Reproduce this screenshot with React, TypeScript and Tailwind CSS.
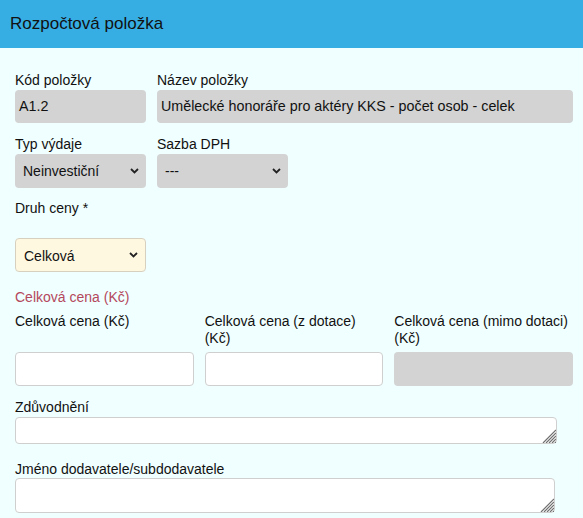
import React from "react";

const Chevron = () => (
  <svg width="9" height="6" viewBox="0 0 9 6" className="pointer-events-none absolute right-[7px] top-1/2 -translate-y-1/2">
    <path d="M1 1 L4.5 4.5 L8 1" fill="none" stroke="#222" strokeWidth="1.8" />
  </svg>
);

const Grip = () => (
  <svg width="14" height="14" viewBox="0 0 14 14" className="pointer-events-none absolute right-[1px] bottom-[1px]">
    <path d="M1 14 L14 1 M4 14 L14 4 M7 14 L14 7 M10 14 L14 10 M13 14 L14 13" stroke="#6f6f6f" strokeWidth="1.2" />
  </svg>
);

function Select({ value, className }: { value: string; className: string }) {
  return (
    <div className={"relative rounded-[4px] " + className}>
      <div className="pl-[8px] text-[14px] text-[#111] leading-[34px] h-full">{value}</div>
      <Chevron />
    </div>
  );
}

function Area({ className }: { className: string }) {
  return (
    <div className={"relative " + className}>
      <textarea className="block w-full h-full resize-none rounded-[4px] bg-white border border-[#cfcfcf] outline-none" />
      <Grip />
    </div>
  );
}

export default function App() {
  return (
    <div className="w-[583px] h-[518px] bg-[#f0ffff] overflow-hidden" style={{ fontFamily: '"Liberation Sans", Arial, sans-serif' }}>
      <div className="h-[48px] bg-[#36aee4] flex items-center pl-[10px]">
        <span className="text-[17px] text-[#111]">Rozpočtová položka</span>
      </div>
      <div className="pl-[15px] pr-[10px] pt-[24px] text-[14px] text-[#111]">
        <div className="flex gap-[11px]">
          <div className="w-[131px] flex flex-col">
            <div className="leading-[17px] mb-[1px]">Kód položky</div>
            <div className="h-[33px] rounded-[4px] bg-[#d3d3d3] pl-[4px] text-[14.3px] leading-[33px]">A1.2</div>
          </div>
          <div className="flex-1 flex flex-col">
            <div className="leading-[17px] mb-[1px]">Název položky</div>
            <div className="h-[33px] rounded-[4px] bg-[#d3d3d3] pl-[4px] text-[14.3px] leading-[33px]">Umělecké honoráře pro aktéry KKS - počet osob - celek</div>
          </div>
        </div>
        <div className="flex gap-[11px] mt-[13px]">
          <div className="w-[131px] flex flex-col">
            <div className="leading-[17px] mb-[1px]">Typ výdaje</div>
            <Select value="Neinvestiční" className="h-[34px] bg-[#d3d3d3]" />
          </div>
          <div className="w-[131px] flex flex-col">
            <div className="leading-[17px] mb-[1px]">Sazba DPH</div>
            <Select value="---" className="h-[34px] bg-[#d3d3d3]" />
          </div>
        </div>
        <div className="leading-[17px] mt-[12px]">Druh ceny *</div>
        <Select value="Celková" className="mt-[21px] w-[131px] h-[34px] bg-[#fff8e1] border border-[#d8d0bf]" />
        <div className="leading-[17px] mt-[17px] text-[#b4485c]">Celková cena (Kč)</div>
        <div className="grid grid-cols-3 gap-[11px] mt-[7px]">
          <div className="flex flex-col justify-between">
            <div className="leading-[17px]">Celková cena (Kč)</div>
            <div className="h-[34px] mt-[5px] rounded-[4px] bg-white border border-[#cfcfcf]"></div>
          </div>
          <div className="flex flex-col justify-between">
            <div className="leading-[17px]">Celková cena (z dotace) (Kč)</div>
            <div className="h-[34px] mt-[5px] rounded-[4px] bg-white border border-[#cfcfcf]"></div>
          </div>
          <div className="flex flex-col justify-between">
            <div className="leading-[17px]">Celková cena (mimo dotaci) (Kč)</div>
            <div className="h-[34px] mt-[5px] rounded-[4px] bg-[#d3d3d3]"></div>
          </div>
        </div>
        <div className="leading-[17px] mt-[13px]">Zdůvodnění</div>
        <Area className="mt-[1px] w-[542px] h-[27px]" />
        <div className="leading-[17px] mt-[17px]">Jméno dodavatele/subdodavatele</div>
        <Area className="w-[540px] h-[35px]" />
      </div>
    </div>
  );
}
